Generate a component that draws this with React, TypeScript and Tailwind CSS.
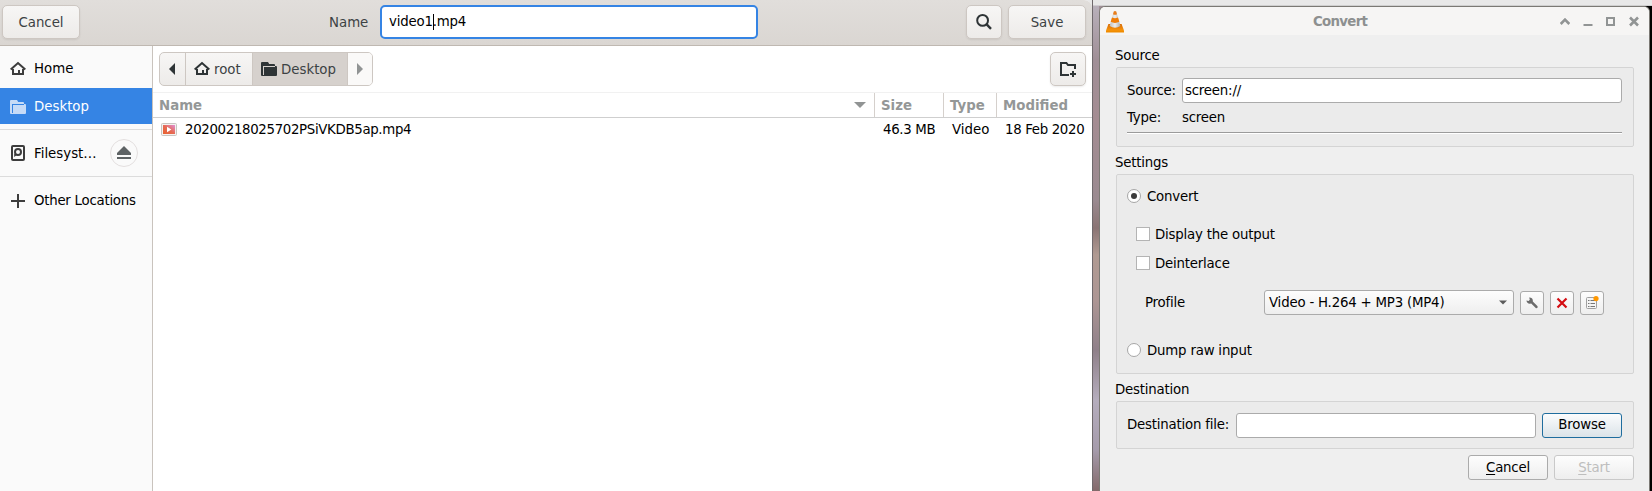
import React from "react";

const gtkButton =
  "flex items-center justify-center rounded-[5px] border border-[#cdc7c2] bg-linear-to-b from-[#f7f6f5] to-[#edebe9] shadow-[0_1px_2px_rgba(0,0,0,0.08)]";
const qtButton =
  "flex items-center justify-center rounded-[3px] border border-[#ababab] bg-linear-to-b from-[#fdfdfd] to-[#eeeeee]";
const groupBox = "rounded-[2px] border border-[#d4d4d4] bg-[#ebebeb]";

function HomeIcon({ color }: { color: string }) {
  return (
    <svg width="16" height="16" viewBox="0 0 16 16" fill="none">
      <path d="M0.7 8.6 L8 2 L15.3 8.6" stroke={color} strokeWidth="2" />
      <path d="M3 8 V13 H13 V8" stroke={color} strokeWidth="2" />
      <path d="M8 9 H10 V13 H8Z" fill={color} />
    </svg>
  );
}

function FolderIcon({ color }: { color: string }) {
  return (
    <svg width="16" height="16" viewBox="0 0 16 16" fill={color}>
      <path
        fillRule="evenodd"
        d="M0 2 Q0 1 1 1 H7 L8.2 3 H13 Q14 3 14 4 V5 H15 Q16 5 16 6 V14 Q16 15 15 15 H1 Q0 15 0 14 Z M2 5 V14 H3 V6 H14 V5 Z"
      />
    </svg>
  );
}

function DiskIcon() {
  return (
    <svg width="16" height="16" viewBox="0 0 16 16" fill="none" stroke="#3d3d3d">
      <rect x="2" y="1" width="12" height="14" rx="1" strokeWidth="2" />
      <circle cx="8" cy="7" r="3" strokeWidth="2" />
      <path d="M4.2 12 V9 L7.4 9.5 Z" fill="#3d3d3d" stroke="none" />
    </svg>
  );
}

function Cone() {
  return (
    <svg width="20" height="23" viewBox="0 0 20 23">
      <defs>
        <linearGradient id="cone-base" x1="0" y1="0" x2="0" y2="1">
          <stop offset="0" stopColor="#d96a00" />
          <stop offset="1" stopColor="#ffa012" />
        </linearGradient>
        <linearGradient id="cone-white" x1="0" x2="1">
          <stop offset="0" stopColor="#bcbcbc" />
          <stop offset=".5" stopColor="#ededed" />
          <stop offset="1" stopColor="#adadad" />
        </linearGradient>
      </defs>
      <path d="M3.4 14 H16.6 L18.8 20 V22 H1.2 V20 Z" fill="url(#cone-base)" />
      <path d="M1 20.6 H19 V22.4 H1Z" fill="#f08c00" />
      <path d="M8.7 1.6 Q10 .5 11.3 1.6 L15.4 16 Q10 19.5 4.6 16 Z" fill="url(#cone-white)" />
      <path d="M8.8 1.4 Q10 .5 11.2 1.4 L12 4.2 Q10 5.2 8 4.2 Z" fill="#e87e1c" />
      <path d="M7 7.6 Q10 9 13 7.6 L14.3 11.8 Q10 14 5.7 11.8 Z" fill="#f07d08" />
    </svg>
  );
}

function SidebarRow({ icon, label, className = "" }: { icon: React.ReactNode; label: string; className?: string }) {
  return (
    <div className={"flex shrink-0 items-center pl-[10px] " + className}>
      {icon}
      <span className="ml-2">{label}</span>
    </div>
  );
}

function SaveDialog() {
  return (
    <section className="flex w-[1092px] shrink-0 flex-col overflow-hidden rounded-tr-[8px] bg-white">
      <header className="flex h-[46px] shrink-0 items-start border-b border-[#bfb8b1] bg-linear-to-b from-[#e1dedb] to-[#dad6d2] pt-[5px] pl-[2px] text-[#3c4244]">
        <button className={gtkButton + " h-[34px] w-[78px] pt-px"}>Cancel</button>
        <label className="mt-[10px] ml-auto w-[51px]">Name</label>
        <div className="flex h-[34px] w-[378px] items-center rounded-[5px] border-2 border-[#3584e4] bg-white pl-[7px] tracking-[-0.2px] text-black">
          <span>video1</span>
          <span className="-mr-px h-[16px] w-px bg-black" />
          <span>.mp4</span>
        </div>
        <button className={gtkButton + " ml-[208px] h-[34px] w-[36px]"}>
          <svg width="16" height="16" viewBox="0 0 16 16" fill="none" stroke="#2e3436" strokeWidth="2">
            <circle cx="6.6" cy="6.4" r="5.4" />
            <path d="M10.4 10.2 L15 14.8" strokeWidth="2.4" />
          </svg>
        </button>
        <button className={gtkButton + " mr-[6px] ml-[6px] h-[34px] w-[78px] pt-px"}>Save</button>
      </header>

      <div className="flex min-h-0 flex-1">
        <nav className="flex w-[153px] shrink-0 flex-col border-r border-[#c9c3bd] bg-[#fafafa] text-black">
          <SidebarRow className="h-[42px] pt-[4px]" icon={<HomeIcon color="#3d3d3d" />} label="Home" />
          <SidebarRow className="h-[36px] bg-[#3584e4] pt-px text-white" icon={<FolderIcon color="#c6dbf7" />} label="Desktop" />
          <div className="mt-[5px] h-px shrink-0 bg-[#dcdcdc]" />
          <div className="flex h-[46px] shrink-0 items-center pl-[10px]">
            <DiskIcon />
            <span className="mt-[2px] ml-2 w-[75px]">Filesyst…</span>
            <span className="ml-[1px] flex size-[28px] items-center justify-center rounded-full border border-[#e3dfdf]">
              <svg width="16" height="16" viewBox="0 0 16 16" fill="#5e6365">
                <path d="M8 1 L15 8 V10 H1 V8 Z" />
                <path d="M1 12 H15 V14 H1 Z" />
              </svg>
            </span>
          </div>
          <div className="h-px shrink-0 bg-[#dcdcdc]" />
          <SidebarRow
            className="h-[47px] tracking-[-0.25px]"
            icon={
              <svg width="16" height="16" viewBox="0 0 16 16" stroke="#3d3d3d" strokeWidth="2">
                <path d="M8 1 V15 M1 8 H15" />
              </svg>
            }
            label="Other Locations"
          />
        </nav>

        <main className="flex min-w-0 flex-1 flex-col">
          <div className="flex h-[47px] shrink-0 items-start justify-between border-b border-[#f1f1f1] pt-[6px] pr-[6px] pl-[6px] text-[#3c4244]">
            <div className="flex h-[34px] overflow-hidden rounded-[5px] border border-[#cdc7c2] bg-linear-to-b from-[#f7f6f5] to-[#edebe9]">
              <div className="flex w-[26px] items-center justify-center border-r border-[#cdc7c2] pr-px">
                <svg width="6" height="12" viewBox="0 0 6 12" fill="#2e3436">
                  <path d="M6 0 V12 L0 6Z" />
                </svg>
              </div>
              <div className="flex w-[67px] items-center border-r border-[#cdc7c2] pl-[8px]">
                <HomeIcon color="#2e3436" />
                <span className="mt-px ml-1">root</span>
              </div>
              <div className="flex w-[95px] items-center border-r border-[#cdc7c2] bg-[#d6d1cd] pl-[8px]">
                <FolderIcon color="#2e3436" />
                <span className="mt-px ml-1">Desktop</span>
              </div>
              <div className="flex w-[24px] items-center justify-center bg-[#faf9f8]">
                <svg width="6" height="12" viewBox="0 0 6 12" fill="#919494">
                  <path d="M0 0 V12 L6 6Z" />
                </svg>
              </div>
            </div>
            <button className={gtkButton + " h-[34px] w-[36px]"}>
              <svg width="16" height="16" viewBox="0 0 16 16" fill="none" stroke="#2e3436" strokeWidth="2">
                <path d="M15 8 V4 H8 L6.4 2 H1 V14 H9" />
                <path d="M13 10 V16 M10 13 H16" />
              </svg>
            </button>
          </div>

          <div className="flex h-[25px] shrink-0 items-stretch border-b border-[#cfcfcf] leading-[25px] font-bold text-[#949797]">
            <div className="flex flex-1 items-center justify-between border-r border-[#d5d0cc] pr-[8px] pl-[6px]">
              <span>Name</span>
              <svg width="12" height="6" viewBox="0 0 12 6" fill="#919494">
                <path d="M0 0 H12 L6 6Z" />
              </svg>
            </div>
            <div className="w-[69px] border-r border-[#d5d0cc] pl-[6px]">Size</div>
            <div className="w-[53px] border-r border-[#d5d0cc] pl-[6px]">Type</div>
            <div className="w-[95px] pl-[6px]">Modified</div>
          </div>

          <div className="flex h-[24px] shrink-0 items-center tracking-[-0.33px] text-black">
            <svg className="ml-[8px]" width="16" height="16" viewBox="0 0 16 16">
              <defs>
                <linearGradient id="thumb" x1="0" x2="1" y1="1" y2="0">
                  <stop offset="0" stopColor="#e8612c" />
                  <stop offset=".5" stopColor="#e66a55" />
                  <stop offset="1" stopColor="#e08fd6" />
                </linearGradient>
              </defs>
              <rect x=".5" y="1.5" width="15" height="12" rx="1" fill="#f4f2f0" stroke="#c9c5c1" />
              <rect x="2" y="3" width="12" height="9" fill="url(#thumb)" />
              <path d="M6 4.8 V10.2 L10.4 7.5Z" fill="#fff" />
            </svg>
            <span className="ml-[8px] flex-1">20200218025702PSiVKDB5ap.mp4</span>
            <span className="w-[69px]">46.3 MB</span>
            <span className="w-[53px] tracking-normal">Video</span>
            <span className="w-[87px]">18 Feb 2020</span>
          </div>
        </main>
      </div>
    </section>
  );
}

function Radio({ checked, label }: { checked?: boolean; label: string }) {
  return (
    <div className="flex h-[16px] items-center">
      <span className="flex size-[14px] items-center justify-center rounded-full border border-[#a6a6a6] bg-white">
        {checked && <span className="size-[6px] rounded-full bg-[#3b3b3b]" />}
      </span>
      <span className="mt-[2px] ml-[6px]">{label}</span>
    </div>
  );
}

function Check({ label }: { label: string }) {
  return (
    <div className="flex h-[16px] items-center">
      <span className="size-[14px] border border-[#b4b4b4] bg-white" />
      <span className="mt-[2px] ml-[5px]">{label}</span>
    </div>
  );
}

function ConvertWindow() {
  return (
    <section className="flex w-[551px] shrink-0 flex-col overflow-hidden rounded-t-[6px] border-x border-t border-[#7b7974] bg-[#efefef] tracking-[-0.2px] text-black">
      <header className="flex h-[28px] shrink-0 items-center bg-[#f6f5f4] pl-[5px]">
        <Cone />
        <span className="mt-[2px] ml-[188px] font-bold tracking-[-0.7px] text-[#8d9090]">Convert</span>
        <svg className="mr-px ml-auto" width="92" height="16" viewBox="0 0 92 16" fill="none" stroke="#919494" strokeWidth="2">
          <path d="M4.7 11 L9 6.7 L13.3 11" strokeWidth="2.6" />
          <path d="M27.5 12 H36.5" />
          <path d="M51 5 H58 V12 H51Z" />
          <path d="M74 4.5 L82 12.5 M82 4.5 L74 12.5" strokeWidth="2.6" />
        </svg>
      </header>
      <div className="flex flex-1 flex-col pr-[15px] pl-[16px]">
        <h2 className="-ml-px mt-[13px] h-[15px] leading-[16px]">Source</h2>
        <div className={groupBox + " mt-[4px] h-[80px] pt-[10px] pr-[11px] pl-[10px]"}>
          <div className="flex h-[25px] items-center">
            <span className="w-[55px]">Source:</span>
            <span className="flex h-[25px] flex-1 items-center rounded-[3px] border border-[#ababab] bg-white pl-[2px]">screen://</span>
          </div>
          <div className="mt-[6px] flex h-[17px] items-center">
            <span className="w-[55px]">Type:</span>
            <span>screen</span>
          </div>
          <div className="mt-[6px] h-[2px] border-t border-[#9b9b9b] bg-white" />
        </div>

        <h2 className="-ml-px mt-[8px] h-[15px] leading-[16px]">Settings</h2>
        <div className={groupBox + " mt-[4px] flex h-[200px] flex-col pl-[10px]"}>
          <div className="mt-[13px]">
            <Radio checked label="Convert" />
          </div>
          <div className="mt-[22px] ml-[9px]">
            <Check label="Display the output" />
          </div>
          <div className="mt-[13px] ml-[9px]">
            <Check label="Deinterlace" />
          </div>
          <div className="mt-[19px] ml-[18px] flex h-[25px] items-center">
            <span className="w-[119px]">Profile</span>
            <span className={qtButton + " h-[25px] w-[250px] !justify-between pr-[6px] pl-[4px]"}>
              Video - H.264 + MP3 (MP4)
              <svg width="8" height="5" viewBox="0 0 8 5" fill="#5c5c5c">
                <path d="M0 .5 H8 L4 4.5Z" />
              </svg>
            </span>
            <button className={qtButton + " ml-[6px] size-[24px]"}>
              <svg width="14" height="14" viewBox="0 0 14 14">
                <path
                  d="M1.4 4.6 L3.6 5 L4.8 3.8 L4.2 1.4 Q7.4 1.2 7.8 4.2 L7.8 5.4 L12.6 10.2 Q13.2 12.4 11 12.2 L6.2 7.6 L4.8 7.8 Q1.8 7.6 1.4 4.6Z"
                  fill="#6c6c6c"
                />
              </svg>
            </button>
            <button className={qtButton + " ml-[6px] size-[24px]"}>
              <svg width="12" height="12" viewBox="0 0 12 12" fill="none" stroke="#d40d12" strokeWidth="2.2">
                <path d="M1.5 1.5 L10.5 10.5 M10.5 1.5 L1.5 10.5" />
              </svg>
            </button>
            <button className={qtButton + " ml-[6px] size-[24px]"}>
              <svg width="14" height="14" viewBox="0 0 14 14" fill="none">
                <rect x="1.5" y="1.5" width="10" height="11" rx="1" fill="#f4f4f4" stroke="#a0a0a0" />
                <path d="M3 4.5H4.5M5.5 4.5H10M3 7.5H4.5M5.5 7.5H10M3 10.5H4.5M5.5 10.5H10" stroke="#777" />
                <circle cx="11" cy="2.6" r="2.6" fill="#ff9800" />
              </svg>
            </button>
          </div>
          <div className="mt-[27px]">
            <Radio label="Dump raw input" />
          </div>
        </div>

        <h2 className="-ml-px mt-[8px] h-[15px] leading-[16px]">Destination</h2>
        <div className={groupBox + " mt-[4px] flex h-[48px] items-center pr-[11px] pl-[10px]"}>
          <span className="w-[109px]">Destination file:</span>
          <span className="h-[25px] flex-1 rounded-[3px] border border-[#ababab] bg-white" />
          <button className="ml-[6px] h-[25px] w-[80px] rounded-[3px] border border-[#1f6d9e] bg-linear-to-b from-[#fbfcfd] to-[#dbe3e8]">
            Browse
          </button>
        </div>
        <div className="mt-[6px] flex justify-end gap-[6px]">
          <button className={qtButton + " h-[25px] w-[80px]"}>
            <span className="underline underline-offset-2">C</span>ancel
          </button>
          <button className={qtButton + " h-[25px] w-[80px] !border-[#c9c9c9] text-[#bebebe]"}>
            <span className="underline underline-offset-2">S</span>tart
          </button>
        </div>
      </div>
    </section>
  );
}

export default function App() {
  return (
    <div className="flex h-[491px] w-[1652px] overflow-hidden bg-[linear-gradient(180deg,#e8e8e8_0px,#e8e8e8_5px,#b8b0ba_6px,#a08f97_60px,#a48c92_120px,#9a8a90_200px,#8a7474_228px,#b09a92_255px,#ad9694_300px,#8f8089_350px,#b5adbd_400px,#a59bab_450px,#83696a_491px)] font-['DejaVu_Sans',sans-serif] text-[13.333px] leading-[16px] whitespace-nowrap">
      <SaveDialog />
      <div className="w-[7px] shrink-0 border-l border-[#6f696c]" />
      <div className="flex w-[553px] flex-col">
        <div className="h-[6px] shrink-0 border-b border-[#cfcfcf] bg-[#e8e8e8]" />
        <div className="flex flex-1 bg-[linear-gradient(90deg,#a08f97_50%,#000_50%)]">
          <ConvertWindow />
        </div>
      </div>
    </div>
  );
}
